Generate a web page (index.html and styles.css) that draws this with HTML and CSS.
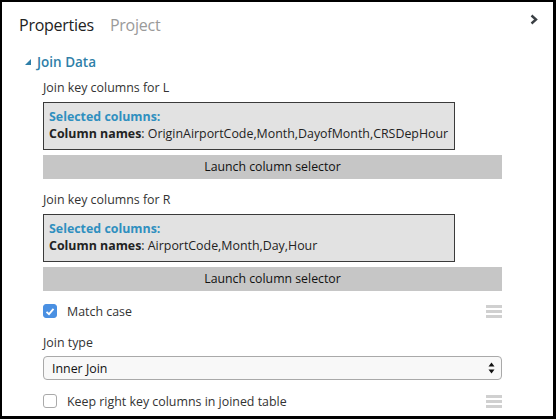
FILE: index.html
```html
<!DOCTYPE html>
<html>
<head>
<meta charset="utf-8">
<link rel="stylesheet" href="styles.css">
</head>
<body>
<div class="panel">
  <div class="tabs">
    <span class="tab active">Properties</span>
    <span class="tab">Project</span>
    <span class="collapse">
      <svg width="8" height="11" viewBox="0 0 8 11"><path d="M1.5 1.5 L6 5.5 L1.5 9.5" fill="none" stroke="#3a3f44" stroke-width="2.4"/></svg>
    </span>
  </div>
  <div class="section-head">
    <svg class="tri" width="8" height="8" viewBox="0 0 8 8"><path d="M7 1 L7 7 L1 7 Z" fill="#2f7fa8"/></svg>
    <span>Join Data</span>
  </div>
  <div class="content">
    <div class="label l1">Join key columns for L</div>
    <div class="colbox">
      <div class="sel">Selected columns:</div>
      <div class="names"><b>Column names</b>: OriginAirportCode,Month,DayofMonth,CRSDepHour</div>
    </div>
    <div class="launch">Launch column selector</div>

    <div class="label l2">Join key columns for R</div>
    <div class="colbox">
      <div class="sel">Selected columns:</div>
      <div class="names"><b>Column names</b>: AirportCode,Month,Day,Hour</div>
    </div>
    <div class="launch">Launch column selector</div>

    <div class="checkrow first">
      <span class="cb checked"><svg width="10" height="9" viewBox="0 0 10 9"><path d="M1.5 4.8 L4 7.2 L8.5 1.8" fill="none" stroke="#fff" stroke-width="1.8"/></svg></span>
      <span class="cbtext">Match case</span>
      <span class="grip"><i></i><i></i><i></i></span>
    </div>

    <div class="label jt">Join type</div>
    <div class="select">
      <span>Inner Join</span>
      <svg width="7" height="12" viewBox="0 0 7 12"><path d="M3.5 0.5 L6.5 4.5 L0.5 4.5 Z M3.5 11.5 L6.5 7.5 L0.5 7.5 Z" fill="#111"/></svg>
    </div>

    <div class="checkrow second">
      <span class="cb"></span>
      <span class="cbtext">Keep right key columns in joined table</span>
      <span class="grip"><i></i><i></i><i></i></span>
    </div>
  </div>
</div>
</body>
</html>
```
FILE: styles.css
```css
html, body {
  margin: 0;
  padding: 0;
  background: #fff;
}
.panel {
  width: 556px;
  height: 419px;
  box-sizing: border-box;
  border-style: solid;
  border-color: #000;
  border-width: 2px 3px 3px 2px;
  overflow: hidden;
  font-family: "Open Sans", "Noto Sans", sans-serif;
  color: #333;
}
.tabs {
  display: flex;
  align-items: center;
  padding: 11px 0 0 17px;
  height: 24px;
}
.tab {
  font-size: 16px;
  color: #9a9a9a;
  margin-right: 17px;
  letter-spacing: -0.25px;
}
.tab.active {
  color: #222;
  margin-right: 16px;
}
.collapse {
  margin-left: auto;
  margin-right: 15px;
  margin-top: -11px;
  display: flex;
}
.section-head {
  display: flex;
  align-items: center;
  margin-top: 15px;
  padding-left: 22px;
  height: 20px;
  font-size: 13.5px;
  font-weight: 600;
  color: #2f7fa8;
}
.tri {
  margin-right: 5px;
}
.content {
  padding: 0 51px 0 41px;
  font-size: 12px;
}
.label {
  height: 18px;
  line-height: 18px;
  font-size: 12.4px;
  letter-spacing: 0;
}
.label.l1 {
  margin-top: 7px;
}
.label.l2 {
  margin-top: 12px;
}
.colbox {
  margin-top: 5px;
  width: 412px;
  box-sizing: border-box;
  height: 48px;
  border: 1px solid #3a3a3a;
  background: #e2e2e2;
  padding: 5px 0 0 5px;
  font-size: 12.4px;
  letter-spacing: 0;
}
.sel {
  color: #2f8fbf;
  font-weight: 700;
  line-height: 17px;
}
.names {
  line-height: 17px;
  color: #222;
}
.names b {
  font-weight: 700;
}
.launch {
  margin-top: 5px;
  height: 24px;
  line-height: 24px;
  background: #c6c6c6;
  text-align: center;
  color: #111;
  font-size: 12.3px;
  letter-spacing: 0;
}
.checkrow {
  display: flex;
  align-items: center;
  height: 18px;
}
.checkrow.first {
  margin-top: 11px;
}
.checkrow.second {
  margin-top: 12px;
}
.cb {
  width: 14px;
  height: 14px;
  box-sizing: border-box;
  border: 1px solid #aaa;
  border-radius: 3px;
  background: #fff;
  display: flex;
  align-items: center;
  justify-content: center;
}
.cb.checked {
  background: #4a90e2;
  border-color: #4a90e2;
}
.cbtext {
  margin-left: 10px;
  font-size: 12.4px;
}
.grip {
  margin-left: auto;
  display: flex;
  flex-direction: column;
  gap: 2px;
  width: 16px;
}
.grip i {
  display: block;
  height: 3px;
  background: #d0d0d0;
}
.label.jt {
  margin-top: 14px;
}
.select {
  margin-top: 4px;
  height: 24px;
  box-sizing: border-box;
  border: 1px solid #a9a9a9;
  border-radius: 4px;
  background: #f8f8f8;
  display: flex;
  align-items: center;
  justify-content: space-between;
  padding: 0 6px 0 8px;
  color: #111;
  font-size: 12.4px;
}
```
